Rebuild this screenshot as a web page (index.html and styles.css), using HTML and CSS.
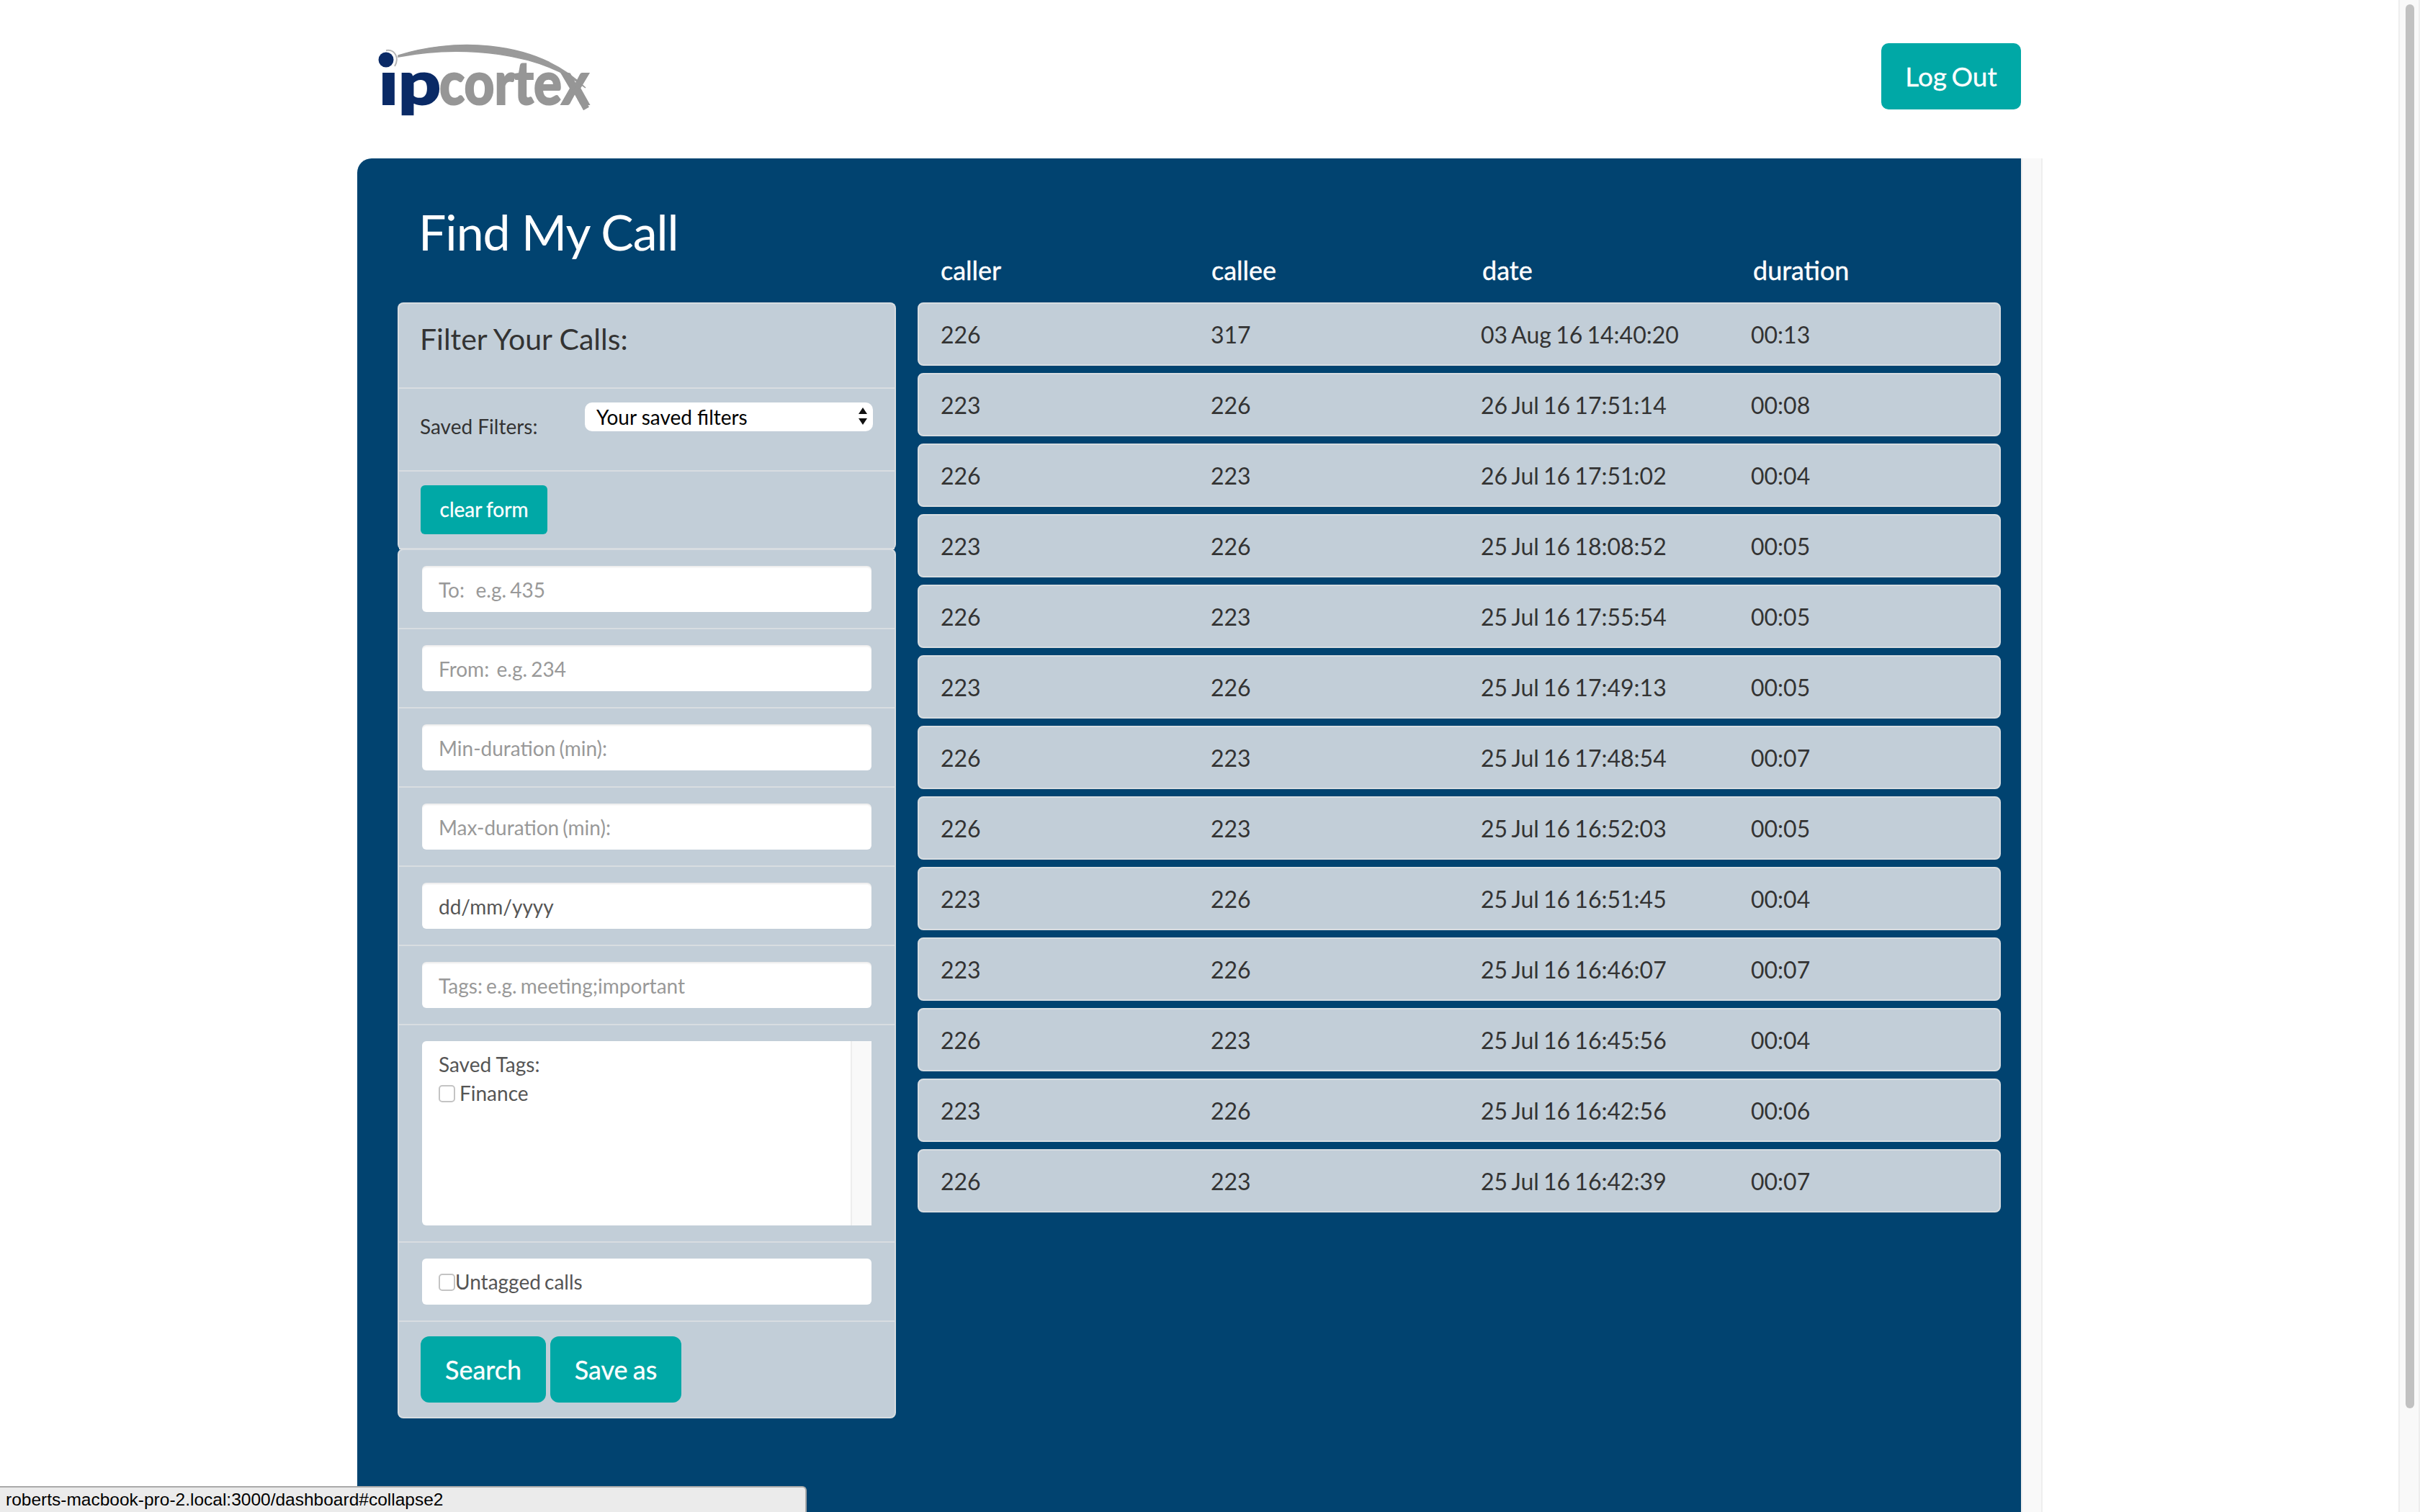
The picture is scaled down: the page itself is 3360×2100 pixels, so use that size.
FILE: index.html
```html
<!DOCTYPE html>
<html lang="en">
<head>
  <meta charset="UTF-8">
  <meta name="viewport" content="width=device-width, initial-scale=1.0">
  <title>Find My Call</title>
  <link rel="stylesheet" href="styles.css">
</head>
<body>
  <div class="page">
    <div class="wrap">
      <header class="topbar">
        <svg class="logo" width="320" height="130" viewBox="520 40 320 130">
          <text class="logo-ip" x="526" y="145" textLength="86" lengthAdjust="spacingAndGlyphs">ip</text>
          <rect x="520" y="60" width="30" height="41" fill="#fff"></rect>
          <path d="M553 77 C 620 55, 740 50, 813 122 C 750 72, 640 62, 553 79 Z" fill="#9a9a9a" stroke="#9a9a9a" stroke-width="1.5"></path>
          <path d="M536 70 C 548 68, 555 80, 548 92" fill="none" stroke="#b5b5b5" stroke-width="2"></path>
          <circle cx="536" cy="83" r="10.5" fill="#0a2a66"></circle>
          <text class="logo-rest" x="610" y="145" textLength="208" lengthAdjust="spacingAndGlyphs">cortex</text>
          <path d="M798 122 L814 151" fill="none" stroke="#969696" stroke-width="9"></path>
        </svg>
        <a class="btn btn-lg" href="#">Log Out</a>
      </header>

      <div class="panel-row">
        <main class="panel">
          <section class="left-col">
            <h1 class="title">Find My Call</h1>
            <div class="filter-head">
              <div class="filter-item heading-item">Filter Your Calls:</div>
              <div class="filter-item saved-item">
                <label class="saved-label">Saved Filters:</label>
                <div class="select-wrap">
                  <select class="saved-select"><option>Your saved filters</option></select>
                  <svg class="select-arrows" width="12" height="24" viewBox="0 0 12 24"><path d="M6 0 L12 9 L0 9 Z M0 15 L12 15 L6 24 Z" fill="#111"></path></svg>
                </div>
              </div>
              <div class="filter-item clear-item"><a class="btn btn-sm" href="#">clear form</a></div>
            </div>
            <form class="filter-list">
              <div class="filter-item"><input class="field" placeholder="To:   e.g. 435"></div>
              <div class="filter-item"><input class="field" placeholder="From:  e.g. 234"></div>
              <div class="filter-item"><input class="field" placeholder="Min-duration (min):"></div>
              <div class="filter-item"><input class="field" placeholder="Max-duration (min):"></div>
              <div class="filter-item"><input class="field" value="dd/mm/yyyy"></div>
              <div class="filter-item"><input class="field" placeholder="Tags: e.g. meeting;important"></div>
              <div class="filter-item tags-item">
                <div class="tags-box">
                  <div class="tags-body">
                    <div class="tags-title">Saved Tags:</div>
                    <label class="check-line"><input type="checkbox" class="check">Finance</label>
                  </div>
                  <div class="tags-track"></div>
                </div>
              </div>
              <div class="filter-item">
                <label class="untagged-box"><input type="checkbox" class="check">Untagged calls</label>
              </div>
              <div class="filter-actions">
                <a class="btn btn-md" href="#">Search</a>
                <a class="btn btn-md" href="#">Save as</a>
              </div>
            </form>
          </section>

          <section class="right-col">
            <div class="call-head">
              <span>caller</span><span>callee</span><span>date</span><span>duration</span>
            </div>
            <div class="call-row"><span>226</span><span>317</span><span>03 Aug 16 14:40:20</span><span>00:13</span></div>
            <div class="call-row"><span>223</span><span>226</span><span>26 Jul 16 17:51:14</span><span>00:08</span></div>
            <div class="call-row"><span>226</span><span>223</span><span>26 Jul 16 17:51:02</span><span>00:04</span></div>
            <div class="call-row"><span>223</span><span>226</span><span>25 Jul 16 18:08:52</span><span>00:05</span></div>
            <div class="call-row"><span>226</span><span>223</span><span>25 Jul 16 17:55:54</span><span>00:05</span></div>
            <div class="call-row"><span>223</span><span>226</span><span>25 Jul 16 17:49:13</span><span>00:05</span></div>
            <div class="call-row"><span>226</span><span>223</span><span>25 Jul 16 17:48:54</span><span>00:07</span></div>
            <div class="call-row"><span>226</span><span>223</span><span>25 Jul 16 16:52:03</span><span>00:05</span></div>
            <div class="call-row"><span>223</span><span>226</span><span>25 Jul 16 16:51:45</span><span>00:04</span></div>
            <div class="call-row"><span>223</span><span>226</span><span>25 Jul 16 16:46:07</span><span>00:07</span></div>
            <div class="call-row"><span>226</span><span>223</span><span>25 Jul 16 16:45:56</span><span>00:04</span></div>
            <div class="call-row"><span>223</span><span>226</span><span>25 Jul 16 16:42:56</span><span>00:06</span></div>
            <div class="call-row"><span>226</span><span>223</span><span>25 Jul 16 16:42:39</span><span>00:07</span></div>
          </section>
        </main>
        <div class="panel-track"></div>
      </div>
    </div>
    <div class="window-track"><div class="window-thumb"></div></div>
  </div>
  <div class="status-bar">roberts-macbook-pro-2.local:3000/dashboard#collapse2</div>
</body>
</html>
```

FILE: styles.css
```css
body {
  margin: 0;
  height: 2100px;
  overflow: hidden;
  background-color: #fff;
  font-family: Lato, "Open Sans", sans-serif;
  font-size: 32px;
  color: #333;
}
.page {
  display: flex;
  height: 2100px;
}
.wrap {
  flex: 1;
  padding-left: 496px;
  overflow: hidden;
}
.topbar {
  width: 2310px;
  height: 220px;
  display: flex;
  justify-content: space-between;
  align-items: flex-start;
}
.logo {
  margin-top: 40px;
  margin-left: 24px;
  overflow: visible;
}
.logo-ip, .logo-rest {
  font-family: Lato, sans-serif;
  font-weight: 900;
  font-size: 83px;
  stroke-width: 2px;
}
.logo-ip {
  fill: #0a2a66;
  stroke: #0a2a66;
}
.logo-rest {
  fill: #969696;
  stroke: #969696;
}
.btn {
  display: inline-block;
  box-sizing: border-box;
  background-color: #00a8a6;
  color: #fff;
  text-decoration: none;
  text-align: center;
  -webkit-text-stroke: .3px #fff;
}
.btn-lg {
  width: 194px;
  height: 92px;
  line-height: 92px;
  margin-top: 60px;
  border-radius: 10px;
  font-size: 37px;
  word-spacing: -3px;
}
.btn-md {
  height: 92px;
  line-height: 92px;
  border-radius: 12px;
  font-size: 36px;
  word-spacing: -2px;
}
.btn-md:first-child {
  width: 174px;
  margin-right: 6px;
}
.btn-md:last-child {
  width: 182px;
}
.btn-sm {
  width: 176px;
  height: 68px;
  line-height: 66px;
  border-radius: 6px;
  font-size: 28px;
  word-spacing: -1px;
}
.panel-row {
  display: flex;
  height: 1880px;
}
.panel {
  width: 2310px;
  box-sizing: border-box;
  padding: 0 28px 0 56px;
  display: flex;
  gap: 30px;
  background-color: #014370;
  border-radius: 20px 0 0 0;
}
.panel-track {
  width: 30px;
  box-sizing: border-box;
  background-color: #f9f9f9;
  border-left: 2px solid #eee;
  border-right: 2px solid #eee;
}
.left-col {
  width: 692px;
}
.title {
  height: 200px;
  margin: 0;
  padding: 58px 0 0 29px;
  box-sizing: border-box;
  font-size: 68px;
  line-height: 88px;
  letter-spacing: -1px;
  font-weight: 400;
  color: #fff;
}
.filter-head, .filter-list {
  background-color: #c2ced8;
  border: 2px solid #d8dde1;
  box-sizing: border-box;
  border-radius: 8px;
}
.filter-head {
  height: 344px;
  border-bottom: none;
}
.filter-list {
  height: 1208px;
  margin-top: -2px;
}
.filter-item {
  box-sizing: border-box;
  height: 110px;
  padding: 22px 32px 0;
  border-bottom: 2px solid #d8dde1;
}
.heading-item {
  height: 118px;
  padding: 26px 29px 0;
  font-size: 41px;
  line-height: 46px;
}
.saved-item {
  height: 115px;
  display: flex;
  justify-content: space-between;
  padding: 18px 30px 0 29px;
}
.saved-label {
  font-size: 28px;
  line-height: 36px;
  margin-top: 16px;
}
.select-wrap {
  position: relative;
  width: 400px;
  height: 40px;
}
.saved-select {
  appearance: none;
  width: 100%;
  height: 40px;
  border: none;
  border-radius: 10px;
  background-color: #fff;
  padding: 0 16px;
  font-family: Lato, sans-serif;
  font-size: 28px;
  color: #000;
}
.select-arrows {
  position: absolute;
  right: 8px;
  top: 8px;
}
.clear-item {
  height: 108px;
  padding: 19px 30px 0;
}
.field {
  display: block;
  box-sizing: border-box;
  width: 624px;
  height: 64px;
  padding: 1px 23px 0;
  border: none;
  border-radius: 6px;
  background-color: #fff;
  box-shadow: inset 0 2px 2px rgba(0, 0, 0, .08);
  font-family: Lato, sans-serif;
  font-size: 28px;
  word-spacing: -2px;
  color: #555;
}
.field::placeholder {
  color: #999;
  opacity: 1;
}
.tags-item {
  height: 302px;
}
.tags-box {
  display: flex;
  width: 624px;
  height: 256px;
  border-radius: 6px 0 0 6px;
  background-color: #fff;
  font-size: 28px;
  color: #555;
}
.tags-body {
  flex: 1;
  padding: 13px 23px;
}
.tags-title {
  line-height: 38px;
}
.check-line {
  display: flex;
  align-items: center;
  height: 42px;
}
.check {
  appearance: none;
  box-sizing: border-box;
  width: 23px;
  height: 24px;
  margin: 2px 6px 0 0;
  background-color: #fff;
  border: 2px solid #c4c4c4;
  border-radius: 5px;
}
.tags-track {
  width: 29px;
  box-sizing: border-box;
  background-color: #f9f9f9;
  border-left: 2px solid #eee;
}
.untagged-box {
  display: flex;
  align-items: center;
  box-sizing: border-box;
  width: 624px;
  height: 64px;
  padding-left: 23px;
  border-radius: 6px;
  background-color: #fff;
  font-size: 28px;
  word-spacing: -2px;
  color: #555;
}
.untagged-box .check {
  margin-right: 0;
}
.filter-actions {
  display: flex;
  padding: 20px 30px;
}
.right-col {
  width: 1504px;
}
.call-head, .call-row {
  display: grid;
  box-sizing: border-box;
}
.call-head {
  grid-template-columns: repeat(4, 376px);
  height: 200px;
  padding: 130px 0 0 32px;
  font-size: 36px;
  line-height: 50px;
  color: #fff;
  -webkit-text-stroke: .4px #fff;
}
.call-row {
  grid-template-columns: repeat(4, 375px);
  height: 88px;
  margin-bottom: 10px;
  padding: 0 0 0 30px;
  align-items: center;
  background-color: #c2ced8;
  border: 2px solid #d8dde1;
  border-radius: 8px;
  font-size: 32px;
  word-spacing: -2px;
}
.window-track {
  width: 30px;
  box-sizing: border-box;
  padding: 6px 6px 0 8px;
  background-color: #f9f9f9;
  border-left: 2px solid #eee;
  border-right: 2px solid #eee;
}
.window-thumb {
  height: 1950px;
  border-radius: 8px;
  background-color: #c1c1c1;
}
.status-bar {
  position: absolute;
  left: 0;
  bottom: 0;
  width: 1120px;
  height: 36px;
  box-sizing: border-box;
  padding-left: 8px;
  background-color: #ebebeb;
  border: 2px solid #aaa;
  border-left: none;
  border-bottom: none;
  border-top-right-radius: 6px;
  font-family: "Liberation Sans", Arial, sans-serif;
  font-size: 24.5px;
  line-height: 34px;
  color: #000;
}
```
